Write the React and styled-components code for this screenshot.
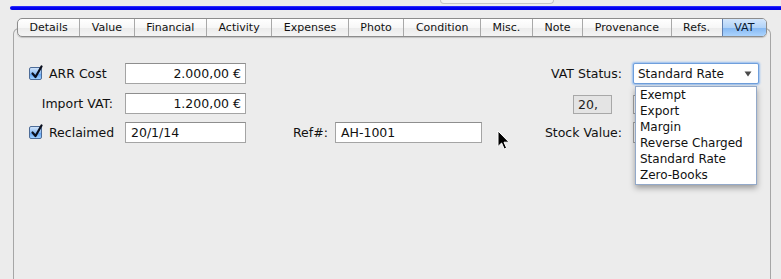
import styled, {createGlobalStyle} from 'styled-components';

const GlobalStyle = createGlobalStyle`
    html, body {
        margin: 0;
        background: #ececec;
        overflow: hidden;
    }
    body {
        font-family: "DejaVu Sans", "Liberation Sans", sans-serif;
        color: #111;
    }
`;

const StyledWindow = styled.div`
    width: 781px;
    height: 279px;
    background: #ececec;
    display: flex;
    flex-direction: column;
`;

const StyledTopStrip = styled.div`
    display: flex;
    height: 6px;
    padding-left: 440px;
`;

const StyledStub = styled.div`
    width: 112px;
    height: 3px;
    background: #f3f3f3;
    border: 1px solid #c6c6c6;
    border-top: none;
    border-radius: 0 0 4px 4px;
`;

const StyledBlueBar = styled.div`
    margin-left: 10px;
    height: 4px;
    background: linear-gradient(#3a3aff, #0000f2 40%, #0000e8);
    border-radius: 2px 0 0 2px;
`;

const StyledTabView = styled.div`
    display: flex;
    flex-direction: column;
    margin: 8px 10px 0 13px;
    flex: 1;
`;

const StyledTabBar = styled.div`
    align-self: center;
    position: relative;
    z-index: 1;
    display: flex;
    width: 750px;
    height: 19px;
    box-sizing: border-box;
    border: 1px solid #8c8c8c;
    border-radius: 5px;
    overflow: hidden;
    background: linear-gradient(#ffffff, #f7f7f7 50%, #ebebeb 51%, #f4f4f4);
    box-shadow: 0 1px 1px rgba(0, 0, 0, 0.18);
`;

const StyledTab = styled.div`
    flex: 1 1 auto;
    display: flex;
    align-items: center;
    justify-content: center;
    padding: 0 9px;
    font-size: 11px;
    white-space: nowrap;
    color: #111;
    border-left: 1px solid ${({$active}) => ($active ? '#5f7eaf' : '#a9a9a9')};

    &:first-child {
        border-left: none;
    }

    ${({$active}) => $active && `
        background: linear-gradient(#d3e6fc, #b2d3f8 50%, #84b7f2 51%, #acd4fd);
        color: #0b1a33;
    `}
`;

const StyledPanel = styled.div`
    margin-top: -9px;
    flex: 1;
    border: 1px solid #a6a6a6;
    border-bottom: none;
    border-radius: 6px 6px 0 0;
    padding: 34px 10px 0 15px;
    position: relative;
`;

const StyledForm = styled.div`
    display: grid;
    grid-template-columns: 96px 121px 47px 42px 147px 151px 126px;
    grid-template-rows: 21px 21px 21px;
    row-gap: 8.5px;
    align-items: center;
    font-size: 12.5px;
`;

const StyledCheckLabel = styled.label`
    display: flex;
    align-items: center;
    gap: 7px;
    grid-column: ${({$col}) => $col};
`;

const StyledCheckbox = styled.span`
    position: relative;
    width: 13px;
    height: 13px;
    box-sizing: border-box;
    border: 1px solid #4d6c98;
    border-radius: 2px;
    background: linear-gradient(#cfe3fa, #8fbdf2 50%, #5c9ef0 51%, #9fd0ff);

    svg {
        position: absolute;
        left: 0;
        top: -3px;
    }
`;

const StyledLabel = styled.span`
    grid-column: ${({$col}) => $col};
    text-align: ${({$align}) => $align || 'right'};
    padding-right: ${({$pad}) => $pad ?? 0}px;
    white-space: nowrap;
`;

const StyledInput = styled.div`
    grid-column: ${({$col}) => $col};
    height: 21px;
    box-sizing: border-box;
    display: flex;
    align-items: center;
    justify-content: ${({$right}) => ($right ? 'flex-end' : 'flex-start')};
    padding: 0 4px 0 5px;
    background: #fff;
    border: 1px solid #a4a4a4;
    border-top-color: #8e8e8e;
    font-size: 12.5px;
    white-space: nowrap;
`;

const StyledRateCell = styled.div`
    grid-column: ${({$col}) => $col};
    display: flex;
    justify-content: flex-end;
    padding-right: 21px;
`;

const StyledRateField = styled.div`
    width: 39px;
    height: 19px;
    margin-top: 2px;
    box-sizing: border-box;
    display: flex;
    align-items: center;
    padding-left: 4px;
    background: #e4e4e4;
    border: 1px solid #a8a8a8;
    color: #222;
`;

const StyledHiddenField = styled.div`
    grid-column: ${({$col}) => $col};
    width: 100px;
    height: ${({$h}) => $h}px;
    margin-top: ${({$top}) => $top || 0}px;
    background: #fff;
    border: 1px solid #a4a4a4;
    box-sizing: border-box;
`;

const StyledSelectCell = styled.div`
    grid-column: ${({$col}) => $col};
    position: relative;
    height: 21px;
`;

const StyledSelect = styled.div`
    height: 21px;
    box-sizing: border-box;
    display: flex;
    align-items: center;
    justify-content: space-between;
    padding: 0 6px 0 4px;
    background: #fff;
    border: 1px solid #6f9fdc;
    border-radius: 2px;
    box-shadow: 0 0 2px 1px #95bdf0;
    font-size: 12px;

    svg {
        margin-top: 1px;
    }
`;

const StyledMenu = styled.ul`
    position: absolute;
    left: 2px;
    top: 23px;
    z-index: 2;
    width: 122px;
    margin: 0;
    padding: 0 0 1px;
    list-style: none;
    background: #fff;
    border: 1px solid #93a9c9;
    box-sizing: border-box;
    box-shadow: 0 3px 6px rgba(0, 0, 0, 0.35);
    font-size: 12px;
`;

const StyledMenuItem = styled.li`
    height: 16px;
    line-height: 16px;
    padding-left: 4px;
    white-space: nowrap;
    color: #111;
`;

const StyledPointer = styled.svg`
    position: absolute;
    left: 483px;
    top: 101px;
`;

const tabs = ['Details', 'Value', 'Financial', 'Activity', 'Expenses', 'Photo', 'Condition', 'Misc.', 'Note', 'Provenance', 'Refs.', 'VAT'];
const vatStatuses = ['Exempt', 'Export', 'Margin', 'Reverse Charged', 'Standard Rate', 'Zero-Books'];

const Check = () => (
    <StyledCheckbox>
        <svg width="14" height="15" viewBox="0 0 14 15">
            <path d="M2.5 8.5 L5.5 12 L11.5 1.5" fill="none" stroke="#0a0f1e" strokeWidth="2.2" strokeLinecap="round" strokeLinejoin="round"/>
        </svg>
    </StyledCheckbox>
);

const App = () => {
    return (<StyledWindow>
            <GlobalStyle/>
            <StyledTopStrip>
                <StyledStub/>
            </StyledTopStrip>
            <StyledBlueBar/>

            <StyledTabView>
                <StyledTabBar>
                    {tabs.map((t) => (<StyledTab key={t} $active={t === 'VAT'}>{t}</StyledTab>))}
                </StyledTabBar>

                <StyledPanel>
                    <StyledForm>
                        {/* row 1 */}
                        <StyledCheckLabel $col={1}><Check/>ARR Cost</StyledCheckLabel>
                        <StyledInput $col={2} $right>2.000,00 €</StyledInput>
                        <StyledLabel $col={6} $pad={11}>VAT Status:</StyledLabel>
                        <StyledSelectCell $col={7}>
                            <StyledSelect>
                                <span>Standard Rate</span>
                                <svg width="8" height="6" viewBox="0 0 8 6">
                                    <path d="M0.5 0.5 H7.5 L4 5.5 Z" fill="#4a4a4a"/>
                                </svg>
                            </StyledSelect>
                            <StyledMenu>
                                {vatStatuses.map((s) => (<StyledMenuItem key={s}>{s}</StyledMenuItem>))}
                            </StyledMenu>
                        </StyledSelectCell>

                        {/* row 2 */}
                        <StyledLabel $col={1} $pad={12}>Import VAT:</StyledLabel>
                        <StyledInput $col={2} $right>1.200,00 €</StyledInput>
                        <StyledRateCell $col={6}>
                            <StyledRateField>20,</StyledRateField>
                        </StyledRateCell>
                        <StyledHiddenField $col={7} $h={19} $top={2}/>

                        {/* row 3 */}
                        <StyledCheckLabel $col={1}><Check/>Reclaimed</StyledCheckLabel>
                        <StyledInput $col={2}>20/1/14</StyledInput>
                        <StyledLabel $col={4} $align="left">Ref#:</StyledLabel>
                        <StyledInput $col={5}>AH-1001</StyledInput>
                        <StyledLabel $col={6} $pad={11}>Stock Value:</StyledLabel>
                        <StyledHiddenField $col={7} $h={21}/>
                    </StyledForm>

                    <StyledPointer width="13" height="21" viewBox="0 0 13 21">
                        <path d="M1 1 L1 16.5 L4.6 13 L7.2 19 L9.6 18 L7 12.2 L12 12.2 Z" fill="#000" stroke="#fff" strokeWidth="1" strokeLinejoin="round"/>
                    </StyledPointer>
                </StyledPanel>
            </StyledTabView>
        </StyledWindow>);
};

export default App;
